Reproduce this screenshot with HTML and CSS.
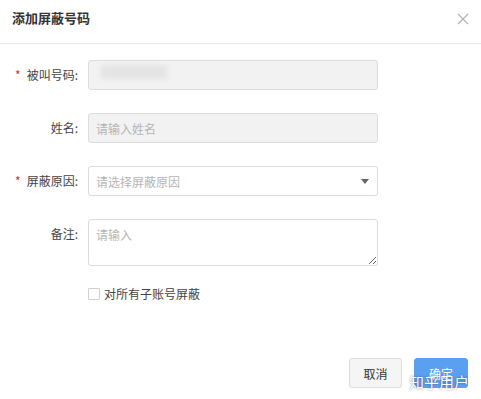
FILE: index.html
```html
<!DOCTYPE html>
<html lang="zh">
<head>
<meta charset="utf-8">
<link rel="stylesheet" href="styles.css">
</head>
<body>
<div class="dialog">
  <div class="header">
    <span class="title">添加屏蔽号码</span>
    <svg class="close" width="12" height="12" viewBox="0 0 12 12"><path d="M1 1L11 11M11 1L1 11" stroke="#b3b3b3" stroke-width="1.2" fill="none"/></svg>
  </div>
  <div class="form">
    <div class="row">
      <label class="label"><span class="star">*</span>被叫号码:</label>
      <div class="field disabled"><span class="blurred"></span></div>
    </div>
    <div class="row">
      <label class="label">姓名:</label>
      <div class="field disabled"><span class="ph">请输入姓名</span></div>
    </div>
    <div class="row">
      <label class="label"><span class="star">*</span>屏蔽原因:</label>
      <div class="field select"><span class="ph">请选择屏蔽原因</span><span class="caret"></span></div>
    </div>
    <div class="row top">
      <label class="label">备注:</label>
      <textarea class="area" placeholder="请输入"></textarea>
    </div>
    <div class="check-row">
      <span class="box"></span><span class="check-text">对所有子账号屏蔽</span>
    </div>
  </div>
  <div class="footer">
    <button class="btn cancel">取消</button>
    <button class="btn ok">确定<span class="mark">知乎用户</span></button>
  </div>
</div>
</body>
</html>
```
FILE: styles.css
```css
* { box-sizing: border-box; }
body {
  margin: 0;
  background: #fff;
  font-family: "Noto Sans CJK SC", "Noto Sans", sans-serif;
  color: #333;
}
.dialog { width: 481px; height: 399px; display: flex; flex-direction: column; }
.header {
  height: 44px;
  border-bottom: 1px solid #e9e9e9;
  display: flex;
  align-items: center;
  justify-content: space-between;
  padding: 0 12px 8px 12px;
}
.title { font-size: 13px; font-weight: bold; color: #333; }
.close { margin-top: 3px; }
.form { padding-top: 16px; display: flex; flex-direction: column; gap: 23px; }
.row { display: flex; align-items: center; }
.row.top { align-items: flex-start; }
.row.top .label { padding-top: 6px; }
.label {
  width: 88px;
  padding-right: 10px;
  text-align: right;
  font-size: 12px;
  color: #444;
  line-height: 18px;
}
.star { color: #c0392b; margin-right: 6px; font-size: 12px; }
.field {
  width: 290px;
  height: 30px;
  border: 1px solid #dcdcdc;
  border-radius: 3px;
  display: flex;
  align-items: center;
  padding: 0 7px;
  font-size: 12px;
}
.disabled { background: #f2f2f2; }
.ph { color: #b5b5b5; }
.blurred {
  display: block;
  width: 66px;
  height: 14px;
  margin-left: 5px;
  margin-top: -6px;
  background: #e4e4e4;
  filter: blur(2px);
}
.select { background: #fff; justify-content: space-between; }
.caret {
  width: 0; height: 0;
  border-left: 4px solid transparent;
  border-right: 4px solid transparent;
  border-top: 5px solid #666;
  margin-right: 1px;
}
.area {
  width: 290px;
  height: 47px;
  border: 1px solid #dcdcdc;
  border-radius: 3px;
  padding: 6px 7px;
  font-family: inherit;
  font-size: 12px;
  resize: vertical;
  outline: none;
}
.area::placeholder { color: #b5b5b5; }
.check-row { display: flex; align-items: center; padding-left: 88px; margin-top: -4px; }
.box { width: 12px; height: 12px; border: 1px solid #d0d0d0; border-radius: 1px; background: #fff; }
.check-text { font-size: 12px; margin-left: 4px; color: #444; }
.footer {
  margin-top: auto;
  padding: 0 13px 11px 0;
  display: flex;
  justify-content: flex-end;
  gap: 12px;
}
.btn {
  height: 30px;
  border-radius: 3px;
  font-family: inherit;
  font-size: 12px;
  padding: 0;
  position: relative;
}
.cancel { width: 53px; background: #f5f5f5; border: 1px solid #dcdcdc; color: #333; }
.ok { width: 54px; background: #5b9ff0; border: 1px solid #5b9ff0; color: #fff; }
.mark {
  position: absolute;
  left: -6px;
  top: 12px;
  font-size: 15px;
  color: #fff;
  white-space: nowrap;
  text-shadow: 0 0 2px rgba(0,0,0,0.5);
}
```
